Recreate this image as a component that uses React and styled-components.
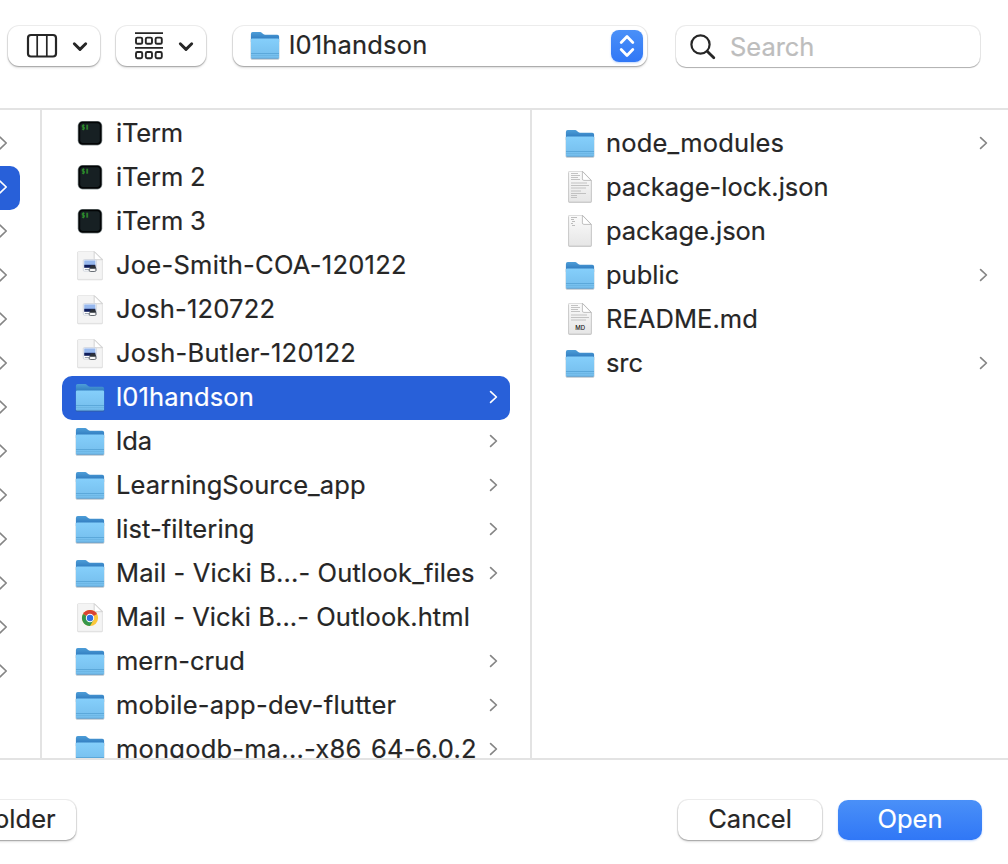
import React from 'react';
import styled, { createGlobalStyle, css } from 'styled-components';

const GlobalStyle = createGlobalStyle`
  * { box-sizing: border-box; }
  body {
    margin: 0;
    background: #fff;
    color: #262626;
    font-family: Inter, "Liberation Sans", sans-serif;
    font-size: 25.5px;
    font-feature-settings: "calt" 0;
    -webkit-text-stroke: 0.2px currentColor;
    overflow: hidden;
  }
`;

const Dialog = styled.div`
  width: 1008px;
  height: 864px;
  display: flex;
  flex-direction: column;
  overflow: hidden;
  background: #fff;
`;

const Toolbar = styled.header`
  height: 108px;
  flex: none;
  display: flex;
  align-items: flex-start;
  padding: 26px 0 0 8px;
`;

const raised = css`
  background: #fff;
  box-shadow: 0 0 0 1px rgba(0, 0, 0, 0.07), 0 1px 1.5px rgba(0, 0, 0, 0.26), 0 2px 3px rgba(0, 0, 0, 0.09);
`;

const ViewButton = styled.button`
  ${raised}
  width: ${(p) => p.$width}px;
  height: 40px;
  margin-right: ${(p) => p.$after}px;
  padding: 0 12px 0 ${(p) => p.$inset}px;
  border: 0;
  border-radius: 11px;
  display: flex;
  align-items: center;
  justify-content: space-between;
`;

const PathPopup = styled.div`
  ${raised}
  width: 414px;
  height: 40px;
  margin-right: 29px;
  padding: 0 4px 0 16px;
  border-radius: 11px;
  display: flex;
  align-items: center;
`;

const PathName = styled.span`
  flex: 1;
  margin-left: 8px;
  line-height: 38px;
  padding-bottom: 2px;
  white-space: nowrap;
  letter-spacing: ${(p) => p.$tracking}px;
`;

const Stepper = styled.span`
  width: 32px;
  height: 32px;
  border-radius: 8px;
  background: linear-gradient(#4a90f8, #3077f6);
  box-shadow: 0 1px 2px rgba(48, 119, 246, 0.3);
  display: flex;
`;

const SearchField = styled.div`
  width: 304px;
  height: 41px;
  padding-left: 14px;
  border-radius: 10px;
  background: #fff;
  box-shadow: 0 0 0 1px rgba(0, 0, 0, 0.08), 0 1px 1px rgba(0, 0, 0, 0.26);
  display: flex;
  align-items: center;
  color: #bdbdbd;
`;

const SearchHint = styled.span`
  margin-left: 14px;
  letter-spacing: -0.05px;
`;

const Browser = styled.main`
  height: 652px;
  flex: none;
  display: flex;
  border-top: 2px solid #e3e3e3;
  border-bottom: 2px solid #e3e3e3;
`;

const Column = styled.section`
  width: ${(p) => p.$width}px;
  flex: none;
  height: 648px;
  overflow: hidden;
  padding: ${(p) => p.$pad};
  border-right: ${(p) => (p.$last ? '0' : '2px solid #e3e3e3')};
`;

const ParentRow = styled.div`
  width: 20px;
  height: 44px;
  display: flex;
  align-items: center;
  justify-content: flex-start;
  padding-bottom: 2px;
  border-radius: 0 10px 10px 0;
  background: ${(p) => (p.$selected ? '#2860d9' : 'transparent')};
  color: ${(p) => (p.$selected ? '#fff' : '#858585')};
`;

const Row = styled.div`
  height: 44px;
  display: flex;
  align-items: center;
  padding: 0 10px 0 12px;
  border-radius: 10px;
  background: ${(p) => (p.$selected ? '#2860d9' : 'transparent')};
  color: ${(p) => (p.$selected ? '#fff' : '#262626')};
`;

const RowName = styled.span`
  flex: 1;
  margin-left: 10px;
  line-height: 40px;
  padding-bottom: 2px;
  white-space: nowrap;
  letter-spacing: ${(p) => p.$tracking}px;
`;

const RowArrow = styled.span`
  display: flex;
  padding-bottom: 2px;
  color: ${(p) => (p.$selected ? '#fff' : '#858585')};
`;

const Footer = styled.footer`
  flex: 1;
  display: flex;
  align-items: flex-start;
  padding-top: 40px;
`;

const FooterButton = styled.button`
  ${raised}
  ${(p) => p.$primary && css`
    background: linear-gradient(#4a90f8, #3077f6);
    box-shadow: 0 1px 2px rgba(48, 119, 246, 0.3);
  `}
  width: ${(p) => p.$width}px;
  flex: none;
  height: 40px;
  margin-left: ${(p) => p.$before}px;
  padding: 0 0 3px;
  border: 0;
  border-radius: 10px;
  font: inherit;
  white-space: nowrap;
  display: flex;
  align-items: center;
  justify-content: center;
  color: ${(p) => (p.$primary ? '#fff' : '#262626')};
`;

const Icon = styled.svg`
  display: block;
  flex: none;
`;

const ColumnsIcon = () => (
  <Icon width="32" height="26" viewBox="0 0 32 26" fill="none" stroke="#262626">
    <rect x="2" y="2" width="28" height="21.5" rx="3" strokeWidth="2.2" />
    <path d="M11.2 2v21.5M20.8 2v21.5" strokeWidth="1.7" />
  </Icon>
);

const GroupIcon = () => (
  <Icon width="28" height="28" viewBox="0 0 28 28" fill="none" stroke="#262626">
    <path d="M0 1.2h28M0 15.8h28" strokeWidth="1.8" />
    {[0, 1, 2].map((i) => (
      <React.Fragment key={i}>
        <rect x={1 + i * 9.8} y="5.6" width="6.2" height="6.2" rx="1.4" strokeWidth="1.9" />
        <rect x={1 + i * 9.8} y="20" width="6.2" height="6.2" rx="1.4" strokeWidth="1.9" />
      </React.Fragment>
    ))}
  </Icon>
);

const DownIcon = () => (
  <Icon width="16" height="11" viewBox="0 0 16 11" fill="none" stroke="#262626" strokeWidth="2.9" strokeLinecap="round" strokeLinejoin="round">
    <path d="M2.3 2.7L8 8.4l5.7-5.7" />
  </Icon>
);

const StepperIcon = () => (
  <Icon width="32" height="32" viewBox="0 0 32 32" fill="none" stroke="#fff" strokeWidth="2.8" strokeLinecap="round" strokeLinejoin="round">
    <path d="M10.2 12.4L16 6.6l5.8 5.8M10.2 19.6L16 25.4l5.8-5.8" />
  </Icon>
);

const SearchIcon = () => (
  <Icon width="26" height="26" viewBox="0 0 26 26" fill="none" stroke="#262626" strokeWidth="2.2" strokeLinecap="round">
    <circle cx="10.5" cy="10.5" r="9.1" />
    <path d="M17.2 17.2l6.6 6.6" strokeWidth="2.8" />
  </Icon>
);

const Arrow = () => (
  <Icon width="12" height="14" viewBox="0 0 12 14" fill="none" stroke="currentColor" strokeWidth="1.7" strokeLinecap="round" strokeLinejoin="round">
    <path d="M2.6 1.6l5.8 5.4-5.8 5.4" />
  </Icon>
);

const ParentArrow = () => (
  <Icon width="8" height="14" viewBox="0 0 8 14" fill="none" stroke="currentColor" strokeWidth="1.7" strokeLinecap="round" strokeLinejoin="round">
    <path d="M0 1.1l6.2 5.9L0 12.9" />
  </Icon>
);

const Defs = () => (
  <svg width="0" height="0" style={{ display: 'block' }}>
    <defs>
      <linearGradient id="folderBack" x1="0" y1="0" x2="0" y2="1">
        <stop offset="0" stopColor="#4d9dd8" />
        <stop offset="0.8" stopColor="#2e79bd" />
        <stop offset="1" stopColor="#2e79bd" />
      </linearGradient>
      <linearGradient id="folderFront" x1="0" y1="0" x2="0" y2="1">
        <stop offset="0" stopColor="#85cffb" />
        <stop offset="1" stopColor="#74bdec" />
      </linearGradient>
      <linearGradient id="paper" x1="0" y1="0" x2="0" y2="1">
        <stop offset="0" stopColor="#fbfbfb" />
        <stop offset="1" stopColor="#e6e6e6" />
      </linearGradient>
    </defs>
  </svg>
);

const FolderIcon = () => (
  <Icon width="32" height="32" viewBox="0 0 32 32">
    <path d="M1.7 9h28.600v19.200q0 1.500-1.500 1.500H3.200q-1.500 0-1.500-1.500z" fill="#3c5a70" opacity=".35" />
    <path d="M1.900 3.900q0-1.800 1.800-1.800h7.500q1 0 1.800.8l1.200 1.100q.8.700 1.900.7h12.200q1.800 0 1.800 1.800V12H1.900z" fill="url(#folderBack)" />
    <path d="M1.900 9.700q0-1.300 1.300-1.300h25.600q1.300 0 1.300 1.300v17.600q0 1.300-1.300 1.300H3.200q-1.300 0-1.300-1.300z" fill="url(#folderFront)" />
    <path d="M2 23.500h28" stroke="#5ba8da" strokeWidth="1" />
    <path d="M2 25.500h28" stroke="#69b1e0" strokeWidth=".7" />
    <path d="M2.600 28.300h26.800" stroke="#5498c8" strokeWidth=".7" />
  </Icon>
);

const TerminalIcon = () => (
  <Icon width="32" height="32" viewBox="0 0 32 32">
    <rect x="3.700" y="3" width="24.600" height="24.400" rx="4.800" fill="#8d9799" />
    <rect x="4.400" y="3.500" width="23.200" height="23.200" rx="4.300" fill="#020405" />
    <rect x="6.200" y="5.300" width="19.600" height="19.600" rx="2.300" fill="#172023" />
    <path d="M10.600 7.300H8.300v1.900h2v2H7.900M9.300 6.300v6" stroke="#2f9a2c" strokeWidth=".9" fill="none" />
    <path d="M13.200 6.700v5" stroke="#2b7c2b" strokeWidth="1.900" />
  </Icon>
);

const Sheet = () => (
  <>
    <path d="M3.300 2h18l7.400 7v20q0 1.200-1.200 1.200h-23q-1.200 0-1.200-1.200z" fill="#000" opacity=".15" />
    <path d="M3.600 2.500q0-1 1-1h15.800l8 8v18.900q0 1-1 1H4.600q-1 0-1-1z" fill="#f4f4f4" stroke="#dedede" strokeWidth=".6" />
    <path d="M20.200 1.700v6.800q0 1.200 1.200 1.200h6.800z" fill="#fff" stroke="#c4c4c4" strokeWidth=".7" />
  </>
);

const ImageFileIcon = () => (
  <Icon width="32" height="32" viewBox="0 0 32 32">
    <Sheet />
    <rect x="9.300" y="9.600" width="13" height="11.500" rx="1" fill="#fff" stroke="#c3cad5" strokeWidth=".7" />
    <rect x="10.200" y="10.400" width="11.200" height="4.800" fill="#97b8ee" />
    <rect x="10.200" y="14.800" width="11.200" height="3" fill="#0e1d5c" />
    <path d="M15.500 18.700l1.300-3.500h4l1.700 3.500z" fill="#2c3138" />
    <path d="M10.800 19.500h4" stroke="#9da7b4" strokeWidth="1" />
    <path d="M15 20q0-1.500 1.800-1.500h3.400q2 0 2 1.500t-2 1.500h-3.400Q15 21.500 15 20z" fill="#f8f8f8" stroke="#484e56" strokeWidth=".8" />
  </Icon>
);

const ChromeFileIcon = () => (
  <Icon width="32" height="32" viewBox="0 0 32 32">
    <Sheet />
    <circle cx="16" cy="16" r="8.100" fill="#fbc73b" />
    <path d="M16 16L9 12A8.100 8.100 0 0 1 23 12z" fill="#d94335" />
    <path d="M9 12A8.100 8.100 0 0 0 16 24.100L19.500 18 16 16z" fill="#35964b" />
    <circle cx="16" cy="16" r="4.200" fill="#fff" />
    <circle cx="16" cy="16" r="3.200" fill="#2f6fe4" />
  </Icon>
);

const DocIcon = ({ lines, short, tag }) => (
  <Icon width="32" height="34" viewBox="0 0 32 34">
    <path d="M4.200 2h16l7.600 8v20.200q0 1.600-1.600 1.600H5.800q-1.600 0-1.600-1.600z" fill="#000" opacity=".25" />
    <path d="M4.600 1.100q0-.8.800-.8h13.200l8.700 9V30q0 1-1 1H5.600q-1 0-1-1z" fill="url(#paper)" stroke="#c4c4c4" strokeWidth=".7" />
    {lines && (
      <g stroke="#bcbcbc" strokeWidth=".9">
        <path d="M7 2.500h7M7 4.500h9M7 6.500h7M7 8.500h9M7 12h16M7 14.500h18M7 17h15" />
        {!tag && <path d="M7 20h10M7 22.500h15M7 24.500h6M7 26.500h6" />}
      </g>
    )}
    {short && <path d="M7 2.500h6M7 4.500h3M8 6.500h3M7 8.500h2M8 10.500h3" stroke="#bdbdbd" strokeWidth="1" />}
    <path d="M18.400.4v7.500q0 1.500 1.500 1.500h7.300z" fill="#fff" stroke="#b0b0b0" strokeWidth=".8" />
    {tag && (
      <text x="16.200" y="27.300" textAnchor="middle" fontFamily="Inter, sans-serif" fontSize="6" fontWeight="500" fill="#222">
        {tag}
      </text>
    )}
  </Icon>
);

const icons = {
  folder: <FolderIcon />,
  term: <TerminalIcon />,
  image: <ImageFileIcon />,
  chrome: <ChromeFileIcon />,
  text: <DocIcon lines />,
  json: <DocIcon short />,
  md: <DocIcon lines tag="MD" />,
};

const files = [
  ['term', 'iTerm', -0.2],
  ['term', 'iTerm 2', -0.15],
  ['term', 'iTerm 3', -0.15],
  ['image', 'Joe-Smith-COA-120122', 0.26],
  ['image', 'Josh-120722', 0.18],
  ['image', 'Josh-Butler-120122', 0.28],
  ['folder', 'l01handson', 0.15, true],
  ['folder', 'lda', 0],
  ['folder', 'LearningSource_app', 0.07],
  ['folder', 'list-filtering', 0.08],
  ['folder', 'Mail - Vicki B...- Outlook_files', 0.13],
  ['chrome', 'Mail - Vicki B...- Outlook.html', 0.06],
  ['folder', 'mern-crud', 0],
  ['folder', 'mobile-app-dev-flutter', 0.22],
  ['folder', 'mongodb-ma...-x86_64-6.0.2', 0.21],
];

const children = [
  ['folder', 'node_modules', 0.17],
  ['text', 'package-lock.json', 0],
  ['json', 'package.json', -0.1],
  ['folder', 'public', 0],
  ['md', 'README.md', 0.05],
  ['folder', 'src', -0.1],
];

const FileRow = ({ entry: [kind, name, tracking, selected] }) => (
  <Row $selected={selected}>
    {icons[kind]}
    <RowName $tracking={tracking}>{name}</RowName>
    {kind === 'folder' && (
      <RowArrow $selected={selected}>
        <Arrow />
      </RowArrow>
    )}
  </Row>
);

export default function App() {
  return (
    <Dialog>
      <GlobalStyle />
      <Defs />
      <Toolbar>
        <ViewButton $width={92} $after={16} $inset={18} aria-label="Column view">
          <ColumnsIcon />
          <DownIcon />
        </ViewButton>
        <ViewButton $width={90} $after={27} $inset={19} aria-label="Group items">
          <GroupIcon />
          <DownIcon />
        </ViewButton>
        <PathPopup>
          <FolderIcon />
          <PathName $tracking={0.2}>l01handson</PathName>
          <Stepper>
            <StepperIcon />
          </Stepper>
        </PathPopup>
        <SearchField>
          <SearchIcon />
          <SearchHint>Search</SearchHint>
        </SearchField>
      </Toolbar>
      <Browser>
        <Column $width={42} $pad="12px 0 0">
          {Array.from({ length: 13 }, (_, i) => (
            <ParentRow key={i} $selected={i === 1}>
              <ParentArrow />
            </ParentRow>
          ))}
        </Column>
        <Column $width={490} $pad="2px 20px 0">
          {files.map((entry) => (
            <FileRow key={entry[1]} entry={entry} />
          ))}
        </Column>
        <Column $width={476} $pad="12px 8px 0 20px" $last>
          {children.map((entry) => (
            <FileRow key={entry[1]} entry={entry} />
          ))}
        </Column>
      </Browser>
      <Footer>
        <FooterButton $width={178} $before={-102}>New Folder</FooterButton>
        <FooterButton $width={144} $before={602}>Cancel</FooterButton>
        <FooterButton $width={144} $before={16} $primary>Open</FooterButton>
      </Footer>
    </Dialog>
  );
}
